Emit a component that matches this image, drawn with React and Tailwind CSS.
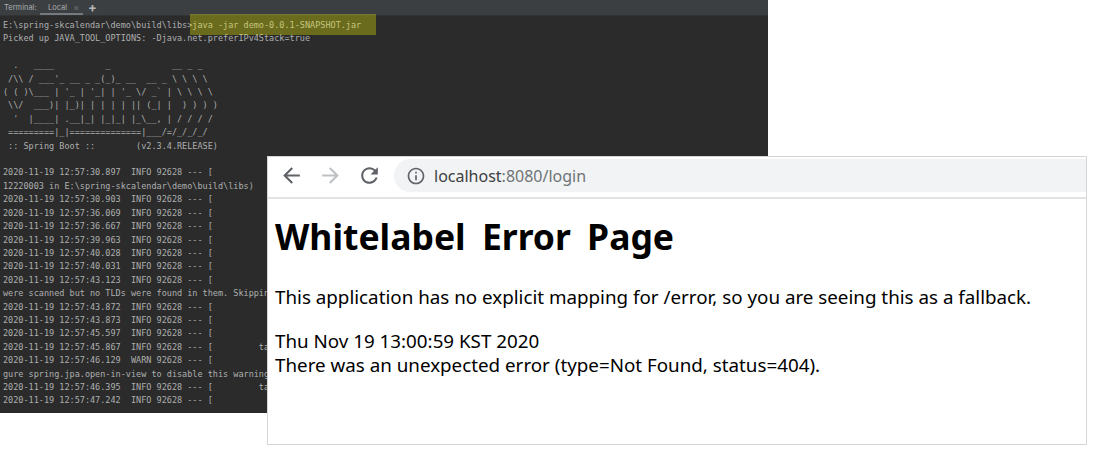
const ascii = [
  "  .   ____          _            __ _ _",
  " /\\\\ / ___'_ __ _ _(_)_ __  __ _ \\ \\ \\ \\",
  "( ( )\\___ | '_ | '_| | '_ \\/ _` | \\ \\ \\ \\",
  " \\\\/  ___)| |_)| | | | | || (_| |  ) ) ) )",
  "  '  |____| .__|_| |_|_| |_\\__, | / / / /",
  " =========|_|==============|___/=/_/_/_/",
  " :: Spring Boot ::        (v2.3.4.RELEASE)",
];
const log = (t, lvl = "INFO") => `2020-11-19 ${t}  ${lvl} 92628 --- [`;
const lines = [
  "E:\\spring-skcalendar\\demo\\build\\libs>java -jar demo-0.0.1-SNAPSHOT.jar",
  "Picked up JAVA_TOOL_OPTIONS: -Djava.net.preferIPv4Stack=true",
  " ",
  ...ascii,
  " ",
  log("12:57:30.897"),
  "12220003 in E:\\spring-skcalendar\\demo\\build\\libs)",
  log("12:57:30.903"),
  log("12:57:36.069"),
  log("12:57:36.667"),
  log("12:57:39.963"),
  log("12:57:40.028"),
  log("12:57:40.031"),
  log("12:57:43.123"),
  "were scanned but no TLDs were found in them. Skipping",
  log("12:57:43.872"),
  log("12:57:43.873"),
  log("12:57:45.597"),
  log("12:57:45.867") + "         ta",
  log("12:57:46.129", "WARN"),
  "gure spring.jpa.open-in-view to disable this warning",
  log("12:57:46.395") + "         ta",
  log("12:57:47.242"),
];

function Ico({ d, className }) {
  return (
    <svg viewBox="0 0 24 24" className={className} fill="currentColor">
      <path d={d} />
    </svg>
  );
}

export default function App() {
  return (
    <div className="relative w-[1093px] h-[454px] bg-white overflow-hidden">
      <div className="w-[768px] h-[413px] bg-[#2b2b2b] flex flex-col">
        <div className="h-[16px] bg-[#3c3f41] border-b border-[#323232] flex items-center text-[7.5px] text-[#a9adb0] font-['Inter',sans-serif]">
          <span className="pl-[4px] w-[40px]">Terminal:</span>
          <div className="relative w-[43px] h-full flex items-center pl-[8px] gap-[6px]">
            <span>Local</span>
            <span className="text-[#6e7274] text-[9px] leading-none">×</span>
            <div className="absolute left-0 right-0 bottom-0 h-[2px] bg-[#747a80]" />
          </div>
          <span className="ml-[5px] text-[13px] leading-none font-bold text-[#b4b8ba]">+</span>
        </div>
        <div className="pl-[3px] pt-[3px] text-[8.5px] leading-[13.42px] text-[#adafaf] whitespace-pre font-['DejaVu_Sans_Mono',monospace]">
          {lines.map((l, i) => (
            <div key={i} className="h-[13.42px]">{l}</div>
          ))}
        </div>
      </div>

      <div className="absolute left-[190px] top-[14px] w-[186px] h-[21px] bg-[#ffff00]/30" />

      <div className="absolute left-[267px] top-[156px] w-[820px] h-[289px] bg-white border border-[#d6d6d6] flex flex-col font-['Noto_Sans',sans-serif]">
        <div className="h-[42px] border-b-2 border-[#e3e3e6] flex items-center pb-[3px]">
          <div className="flex items-center w-[126px] pl-[10.5px] gap-[14px]">
            <Ico className="w-[25px] h-[25px] text-[#5f6368]" d="M20 11H7.83l5.59-5.59L12 4l-8 8 8 8 1.41-1.41L7.83 13H20v-2z" />
            <Ico className="w-[25px] h-[25px] text-[#bdc1c6]" d="M12 4l-1.41 1.41L16.17 11H4v2h12.17l-5.58 5.59L12 20l8-8z" />
            <Ico className="w-[25px] h-[25px] text-[#5f6368]" d="M17.65 6.35C16.2 4.9 14.21 4 12 4c-4.42 0-7.99 3.58-7.99 8s3.57 8 7.99 8c3.73 0 6.84-2.55 7.73-6h-2.08c-.82 2.33-3.04 4-5.65 4-3.31 0-6-2.69-6-6s2.69-6 6-6c1.66 0 3.14.69 4.22 1.78L13 11h7V4l-2.35 2.35z" />
          </div>
          <div className="flex-1 h-[33px] bg-[#f1f3f4] rounded-l-full flex items-center pl-[12px]">
            <Ico className="w-[20px] h-[20px] text-[#5f6368]" d="M11 7h2v2h-2V7zm0 4h2v6h-2v-6zm1-9C6.48 2 2 6.48 2 12s4.48 10 10 10 10-4.48 10-10S17.52 2 12 2zm0 18c-4.41 0-8-3.59-8-8s3.59-8 8-8 8 3.59 8 8-3.59 8-8 8z" />
            <span className="ml-[8px] text-[16px] leading-none text-[#6f7377]">
              <span className="text-[#3c4043]">localhost</span>:8080/login
            </span>
          </div>
        </div>
        <div className="pl-[7px] text-black">
          <h1 className="mt-[12px] text-[35.5px] leading-[50px] font-bold [word-spacing:7px]">Whitelabel Error Page</h1>
          <p className="mt-[24px] text-[18.8px] leading-[24px]">This application has no explicit mapping for /error, so you are seeing this as a fallback.</p>
          <div className="mt-[20px] text-[18.8px] leading-[24px]">Thu Nov 19 13:00:59 KST 2020</div>
          <div className="text-[18.8px] leading-[24px]">There was an unexpected error (type=Not Found, status=404).</div>
        </div>
      </div>
    </div>
  );
}
